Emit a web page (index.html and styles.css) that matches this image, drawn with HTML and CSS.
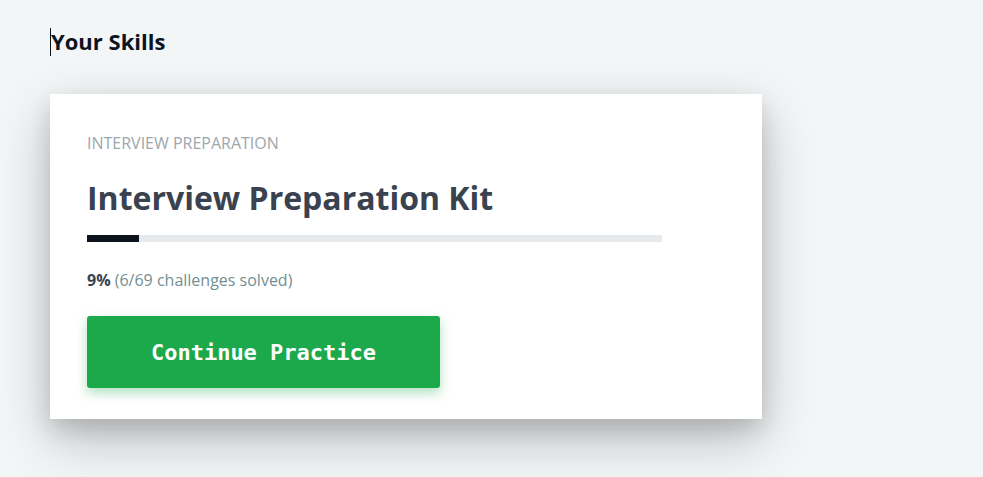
FILE: index.html
```html
<!DOCTYPE html>
<html>
<head>
<meta charset="utf-8">
<link rel="stylesheet" href="styles.css">
</head>
<body>
<div class="page">
  <h2 class="heading"><span class="caret"></span><span class="heading-text">Your Skills</span></h2>
  <div class="card">
    <div class="eyebrow">INTERVIEW PREPARATION</div>
    <h1 class="title">Interview Preparation Kit</h1>
    <div class="track"><div class="fill" style="width:9%"></div></div>
    <p class="stats"><b>9%</b> (6/69 challenges solved)</p>
    <button class="btn">Continue Practice</button>
  </div>
</div>
</body>
</html>
```
FILE: styles.css
```css
html, body {
  margin: 0;
  padding: 0;
  background: #f3f6f7;
  font-family: "Open Sans", "Noto Sans", sans-serif;
}
body {
  min-height: 477px;
}
.page {
  padding: 28px 0 80px 50px;
}
.heading {
  margin: 0;
  display: flex;
  align-items: center;
  font-size: 22px;
  font-weight: 700;
  color: #0e141e;
  height: 28px;
  line-height: 26px;
}
.heading-text {
  padding-bottom: 2px;
}
.caret {
  width: 1px;
  height: 28px;
  background: #0e141e;
}
.card {
  margin-top: 38px;
  width: 712px;
  height: 325px;
  box-sizing: border-box;
  background: #fff;
  padding: 38px 37px 0 37px;
  box-shadow: 0 10px 20px rgba(0, 0, 0, 0.12), 0 20px 50px rgba(0, 0, 0, 0.24);
}
.eyebrow {
  font-size: 16px;
  color: #9ca7ad;
  line-height: 22px;
}
.title {
  margin: 24px 0 0 0;
  font-size: 32px;
  font-weight: 700;
  color: #39424e;
  line-height: 40px;
}
.track {
  margin-top: 17px;
  width: 575px;
  height: 7px;
  background: #e7eaec;
}
.fill {
  height: 100%;
  background: #0e141e;
}
.stats {
  margin: 27px 0 0 0;
  font-size: 16px;
  line-height: 22px;
  color: #738f93;
}
.stats b {
  color: #39424e;
  font-weight: 700;
}
.btn {
  display: block;
  margin-top: 25px;
  width: 353px;
  height: 72px;
  border: none;
  border-radius: 3px;
  background: #1ba94c;
  color: #fff;
  font-family: "DejaVu Sans Mono", monospace;
  font-weight: 700;
  font-size: 22px;
  box-shadow: 0 5px 12px rgba(27, 169, 76, 0.35);
  padding: 0;
}
```
